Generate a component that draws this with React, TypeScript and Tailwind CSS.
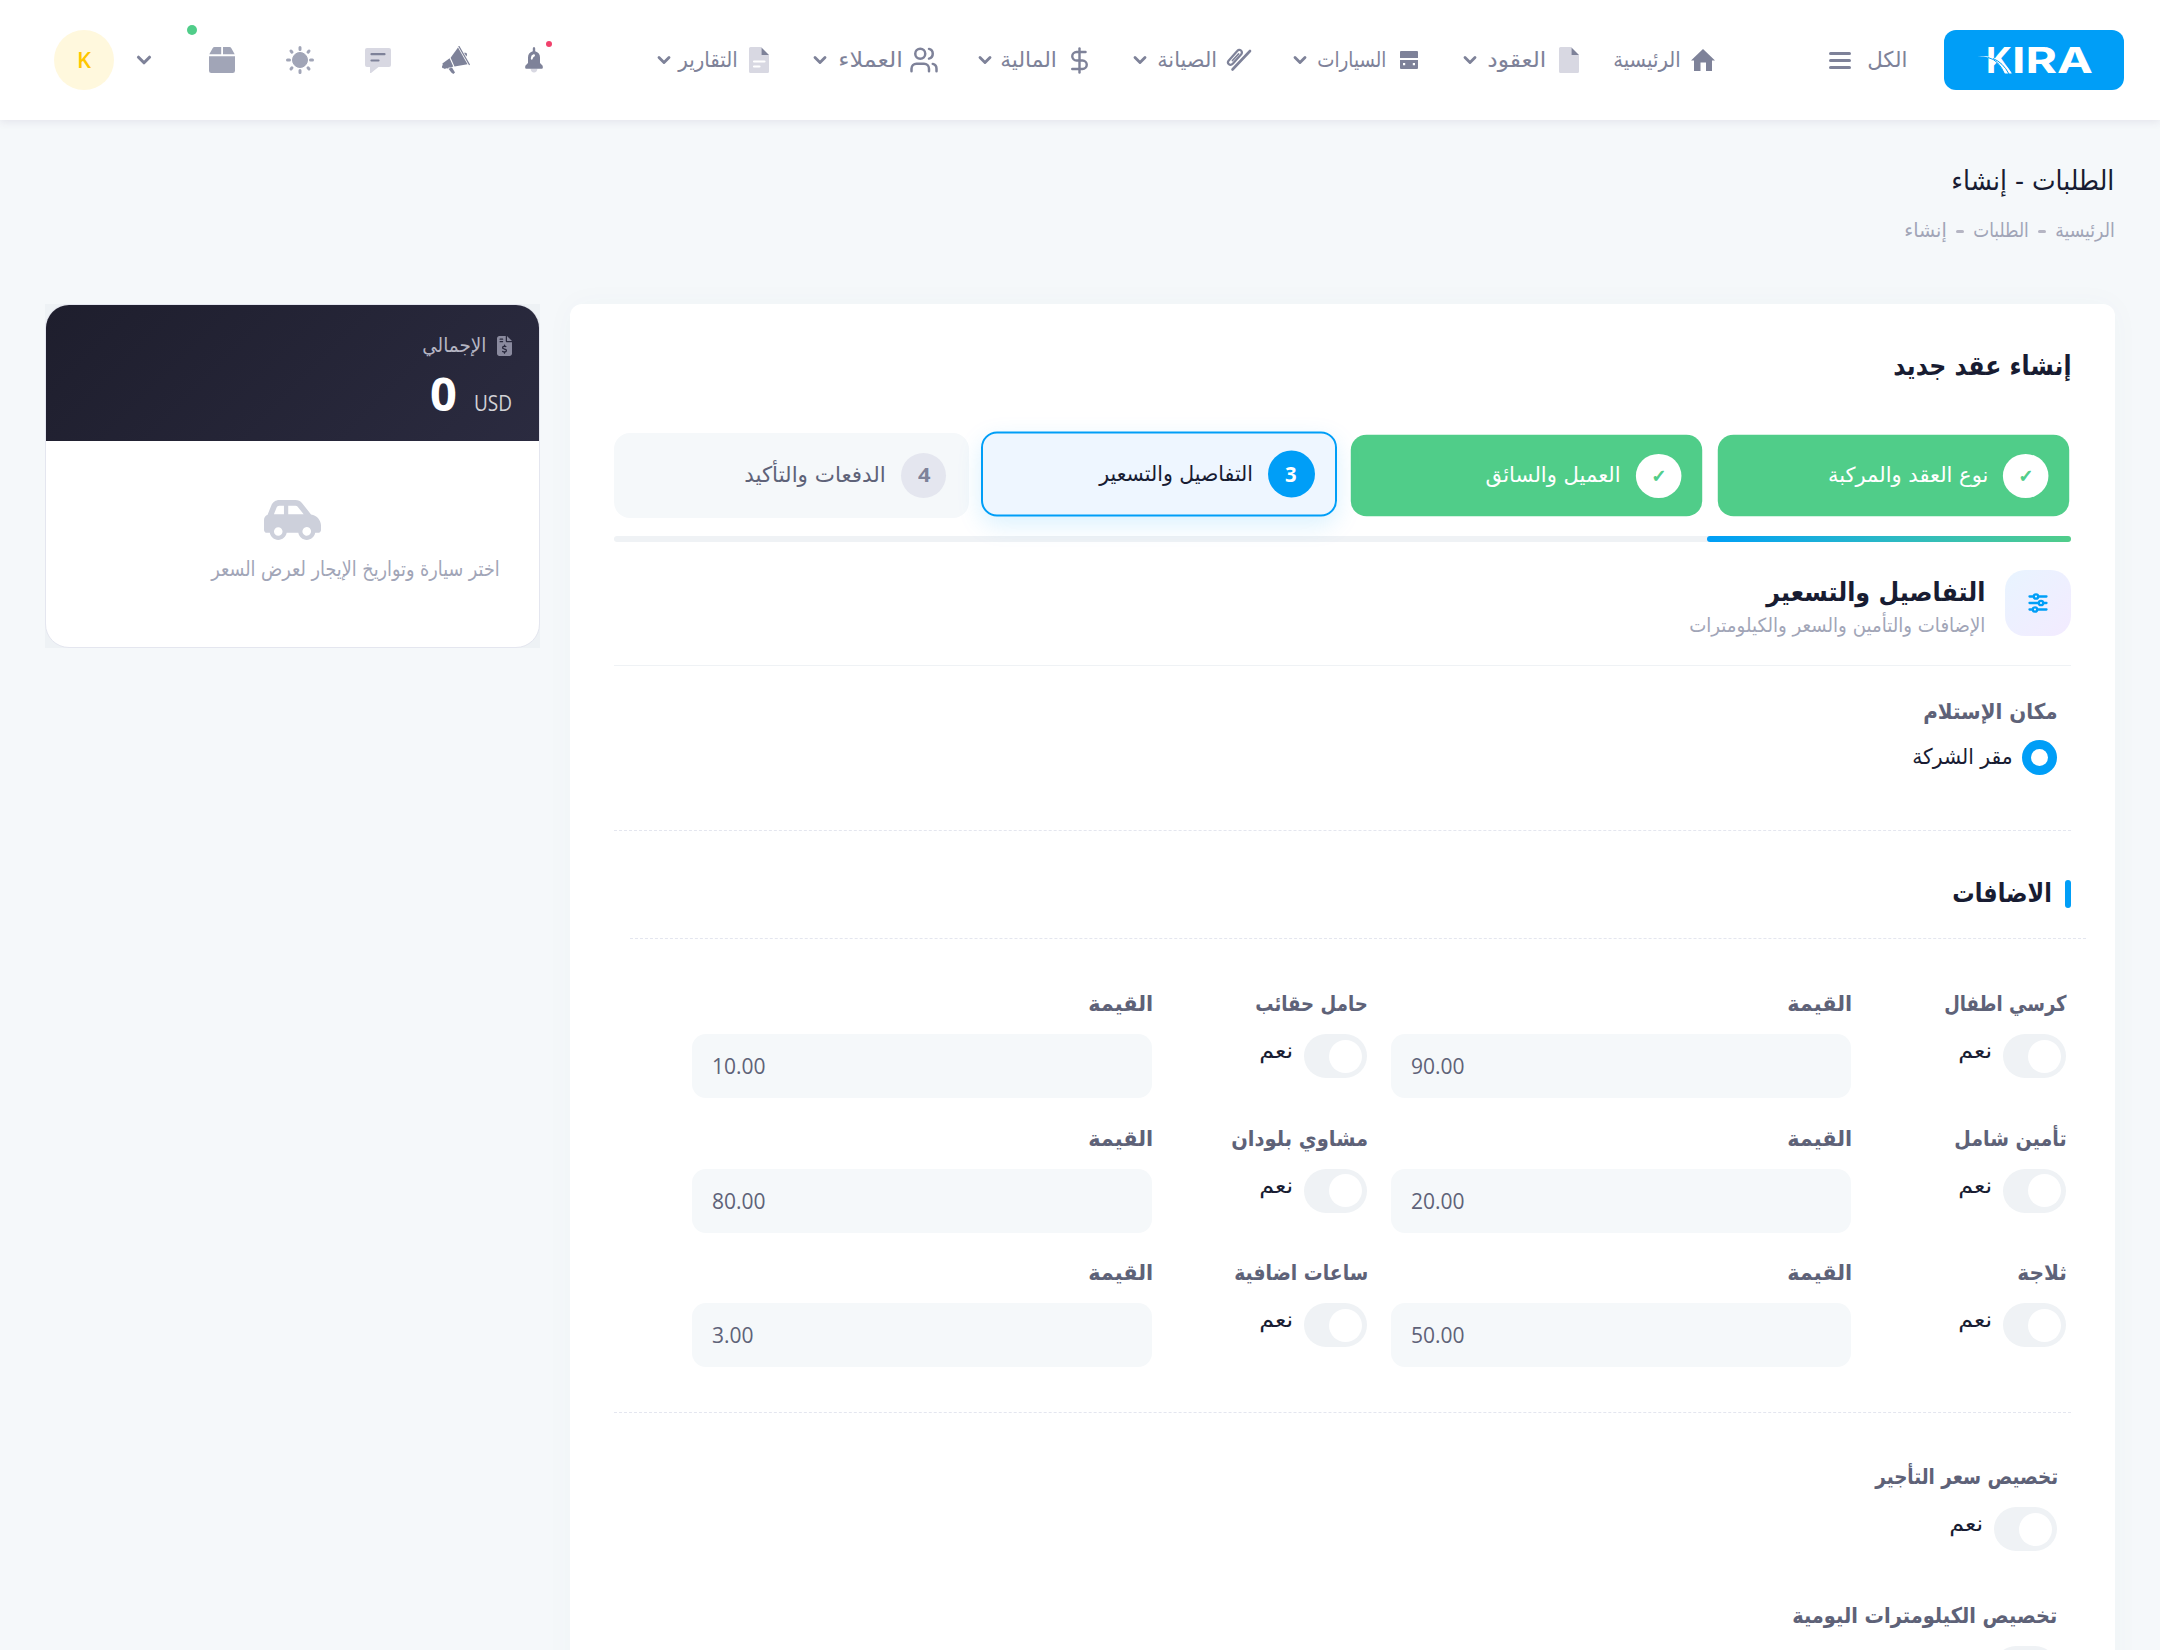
import clsx from "clsx";
import { ChevronDown, DollarSign, Users } from "lucide-react";
import { ReactNode, useLayoutEffect, useRef, useState } from "react";
import { FaCarSide, FaFileInvoiceDollar } from "react-icons/fa6";

type TextProps = {
	w: number;
	className?: string;
	ltr?: boolean;
	children: string;
};

// single line of text condensed to a fixed width
function Text({ w, className, ltr, children }: TextProps) {
	const ref = useRef<HTMLSpanElement>(null);
	const [scale, setScale] = useState(1);
	useLayoutEffect(() => {
		if (ref.current) setScale((ltr ? w : w + 1.5) / ref.current.offsetWidth);
	}, [w, ltr, children]);
	return (
		<span
			dir={ltr ? "ltr" : "rtl"}
			className={clsx("inline-block shrink-0 whitespace-nowrap leading-none", className)}
			style={{ width: w }}
		>
			<span
				ref={ref}
				className={clsx("inline-block", ltr ? "origin-left" : "origin-[100%_85%]")}
				style={{
					transform: ltr ? `scaleX(${scale})` : `translateX(0.7px) scale(${scale}, 1.08)`,
				}}
			>
				{children}
			</span>
		</span>
	);
}

const HomeIcon = () => (
	<svg width="24" height="22" viewBox="0 0 24 22" fill="currentColor">
		<path d="M12 0 24 11.5h-3V22h-6v-8.500H9.500V22H3V11.500H0z" />
	</svg>
);

const FileIcon = ({ lines }: { lines?: boolean }) => (
	<svg width="20" height="26" viewBox="0 0 20 26">
		<path d="M1.500 0H12.500V8H20V24.500Q20 26 18.500 26H1.500Q0 26 0 24.500V1.500Q0 0 1.500 0z" fill="#d8d8e2" />
		<path d="M12.500 0.500 20 8H12.500z" fill="#7e8299" />
		{lines && (
			<path d="M5 14.500h10.500M5 19.500h5.500" stroke="#fff" strokeWidth="2.200" strokeLinecap="round" />
		)}
	</svg>
);

const CarsIcon = () => (
	<svg width="18" height="18" viewBox="0 0 18 18" fill="currentColor">
		<path d="M1 0h16q1 0 1 1v6H0V1q0-1 1-1z" />
		<path
			fillRule="evenodd"
			d="M0 9h18v8q0 1-1 1H1q-1 0-1-1zM3 12v2.200h2.200V12zM12.800 12v2.200H15V12z"
		/>
	</svg>
);

const ToolsIcon = () => (
	<svg width="26" height="24" viewBox="0 0 26 24" fill="none" stroke="currentColor" strokeLinecap="round">
		<path d="M2.800 12.500 11 3.300q2-2.500 4-.800 1.800 1.800 0 4L7 15.500q-2.200 2.300-4.200.700-1.800-1.700 0-3.700z" strokeWidth="2.200" />
		<path d="M6.500 12.500 12.500 6" strokeWidth="1.800" />
		<path d="M6.500 21.500 24 3" strokeWidth="2.600" />
	</svg>
);

const BellIcon = () => (
	<svg width="18" height="26" viewBox="0 0 18 26">
		<path d="M5.500 21.500h7q-.5 4-3.500 4t-3.500-4z" fill="#d8d8e2" />
		<path
			d="M9 0q1.200 0 1.200 1.500v2.700Q15 5.500 15 10.500V16l2.500 2.500q1 3.300-.800 3.300H1.300Q-.5 21.800.5 18.500L3 16v-5.500Q3 5.500 7.800 4.200V1.500Q7.800 0 9 0z"
			fill="#7e8299"
		/>
		<path d="M5.800 11.200Q6 8 8.500 7.300q1.600-.200 1.500 1.200 0 .800-1 1.200-1 .5-1.300 2-.3 1-1 1-.900-.200-.900-1.500z" fill="#fff" />
	</svg>
);

const MegaphoneIcon = () => (
	<svg width="28" height="28" viewBox="0 0 28 28" fill="#7e8299">
		<path d="M17 .5 27.300 18.500" stroke="#7e8299" strokeWidth="1.300" strokeLinecap="round" />
		<path d="M16 1.500 25.500 18.200 12.500 20.500 8.600 11.700z" />
		<path d="M22 6.800q2.600-.6 3 1.200.2 1.300-.6 2.500z" />
		<path d="M7.600 12.300 11.300 20.500 8 21.700l-1-.5-1 1.300-2-.3-1 .8-1.500-.8-1.300-.2-.2-2 .8-1-.4-1.500z" />
		<path d="M6.500 22.700 10 21.500l3 5-1.700 1.500-2-1.500z" />
	</svg>
);

const MessageIcon = () => (
	<svg width="26" height="25" viewBox="0 0 26 25">
		<path d="M2 0h22q2 0 2 2v15q0 2-2 2H13.500L6 25h-1v-6H2q-2 0-2-2V2Q0 0 2 0z" fill="#d8d8e2" />
		<path d="M6.500 6.200h13M6.500 12.500h7" stroke="#7e8299" strokeWidth="2.200" strokeLinecap="round" />
	</svg>
);

const SunIcon = () => (
	<svg width="28" height="28" viewBox="0 0 28 28" fill="#a1a5b7" stroke="#a1a5b7">
		<circle cx="14" cy="14" r="7.500" />
		<path
			d="M14 1.500v2M14 24.500v2M1.500 14h2M24.500 14h2M5 5l1 1.200M22 21.800l1 1.200M5 23l1-1.200M22 6.200 23 5"
			strokeWidth="3"
			strokeLinecap="round"
		/>
	</svg>
);

const BoxIcon = () => (
	<svg width="26" height="26" viewBox="0 0 26 26" fill="#a1a5b7">
		<path d="M5.500 0h6.700v7.300H.3L3.800 1Q4.300 0 5.500 0zM14 0h6.500q1.200 0 1.700 1l3.500 6.300H14z" />
		<path d="M0 9.200h26v14.500Q26 26 23.700 26H2.300Q0 26 0 23.700z" />
	</svg>
);

const SlidersIcon = () => (
	<svg width="20" height="20" viewBox="0 0 20 20" fill="none" stroke="#009ef7" strokeWidth="2.300" strokeLinecap="round">
		<path d="M1.500 3.500h4M10.500 3.500h8M1.500 10h9M15.500 10h3M1.500 16.500h3M9.500 16.500h9" />
		<circle cx="8" cy="3.500" r="2.200" />
		<circle cx="13" cy="10" r="2.200" />
		<circle cx="7" cy="16.500" r="2.200" />
	</svg>
);

const Logo = () => (
	<svg width="120" height="50" viewBox="0 -9 120 50" fill="#fff" direction="ltr">
		<g fontFamily="Inter, Open Sans, sans-serif" fontWeight="700" fontSize="35.500">
			<text x="12" y="29" textLength="26" lengthAdjust="spacingAndGlyphs">K</text>
			<text x="38" y="29" textLength="81" lengthAdjust="spacingAndGlyphs">IRA</text>
		</g>
		<path d="M3 12.200Q22 11 30.500 29.500h7.300Q27 10 3 12.200z" />
		<path d="M14 13.500Q25 16 30.500 30M19 14.500Q29 18.500 35 30" fill="none" stroke="#009ef7" strokeWidth="1" />
	</svg>
);

type NavItem = {
	label: string;
	w: number;
	icon: ReactNode;
	iconGap?: string;
	menuGap?: string;
};

const navItems: NavItem[] = [
	{ label: "الرئيسية", w: 66, icon: <HomeIcon /> },
	{ label: "العقود", w: 58, icon: <FileIcon />, menuGap: "mr-2" },
	{ label: "السيارات", w: 68, icon: <CarsIcon />, menuGap: "mr-2" },
	{ label: "الصيانة", w: 58, icon: <ToolsIcon />, menuGap: "mr-2" },
	{ label: "المالية", w: 55, icon: <DollarSign size={29} strokeWidth={2} />, menuGap: "mr-1.5" },
	{ label: "العملاء", w: 63, icon: <Users size={32} strokeWidth={2} />, iconGap: "ml-[7px]", menuGap: "mr-[9px]" },
	{ label: "التقارير", w: 58, icon: <FileIcon lines />, iconGap: "ml-[7px]", menuGap: "mr-[5px]" },
];

const toolIcons = [
	<BellIcon />,
	<MegaphoneIcon />,
	<MessageIcon />,
	<SunIcon />,
	<BoxIcon />,
];

const extras = [
	[
		{ label: "كرسي اطفال", w: 121, value: "90.00", vw: 52 },
		{ label: "حامل حقائب", w: 111, value: "10.00", vw: 52 },
	],
	[
		{ label: "تأمين شامل", w: 111, value: "20.00", vw: 52 },
		{ label: "مشاوي بلودان", w: 135, value: "80.00", vw: 52 },
	],
	[
		{ label: "ثلاجة", w: 48, value: "50.00", vw: 52 },
		{ label: "ساعات اضافية", w: 133, value: "3.00", vw: 40 },
	],
];

function Header() {
	return (
		<header className="relative flex h-[120px] items-center bg-white pr-9 text-xl text-[#7e8299] shadow-[0_2px_8px_rgba(82,63,105,0.1)]">
			<div className="flex h-[60px] w-[180px] items-center justify-center rounded-xl bg-[#009ef7]">
				<Logo />
			</div>
			<Text w={39} className="mr-[37px]">الكل</Text>
			<div className="mr-[17px] flex w-[22px] flex-col gap-1">
				<span className="h-[3px] rounded bg-[#7e8299]" />
				<span className="h-[3px] rounded bg-[#7e8299]" />
				<span className="h-[3px] rounded bg-[#7e8299]" />
			</div>
			<nav className="mr-[111px] flex items-center gap-[30px]">
				{navItems.map((item) => (
					<a key={item.label} className="flex items-center">
						<span className={clsx("flex w-[30px] justify-center", item.iconGap ?? "ml-2")}>
							{item.icon}
						</span>
						<Text w={item.w}>{item.label}</Text>
						{item.menuGap && (
							<span className={clsx("flex w-[26px] pl-2", item.menuGap)}>
								<ChevronDown size={20} strokeWidth={3.4} className="shrink-0" />
							</span>
						)}
					</a>
				))}
			</nav>
			<div className="mr-auto flex items-center pl-[54px]">
				{toolIcons.map((icon, idx) => (
					<button key={idx} className="relative flex w-[78px] justify-center">
						{icon}
						{idx === 0 && (
							<span className="absolute -top-[6px] right-[21px] size-[6px] rounded-full bg-[#f1416c]" />
						)}
						{idx === 4 && (
							<span className="absolute -top-[22px] left-[4px] size-[10px] rounded-full bg-[#50cd89]" />
						)}
					</button>
				))}
				<span className="flex w-[69px] pr-7">
					<ChevronDown size={22} strokeWidth={3.4} />
				</span>
				<span className="flex size-[60px] items-center justify-center rounded-full bg-[#fff8dd] pb-[2px] font-['Open_Sans'] text-[22px] font-semibold text-[#ffc700]">
					<Text w={14} ltr>K</Text>
				</span>
			</div>
		</header>
	);
}

function Toggle() {
	return (
		<div className="flex gap-[11px]">
			<span className="flex h-11 w-[63px] items-center rounded-full bg-[#eff2f5] pr-[5px]">
				<span className="size-[33px] rounded-full bg-white" />
			</span>
			<Text w={33} className="mt-[7px] text-xl text-[#181c32]">نعم</Text>
		</div>
	);
}

function Label({ w, children }: { w: number; children: string }) {
	return (
		<div className="flex h-5 text-xl font-bold text-[#5e6278]">
			<Text w={w}>{children}</Text>
		</div>
	);
}

function Steps() {
	return (
		<div className="relative z-10 mt-[54px] grid h-[85px] grid-cols-4 gap-3 text-xl">
			{[
				{ label: "نوع العقد والمركبة", w: 161 },
				{ label: "العميل والسائق", w: 135 },
			].map((step) => (
				<div
					key={step.label}
					className="flex scale-x-[.99] scale-y-[.96] items-center gap-4 rounded-2xl bg-[#50cd89] pr-[21px] text-white"
				>
					<span className="flex size-[46px] items-center justify-center rounded-full bg-white text-lg font-bold text-[#50cd89] [-webkit-text-stroke:1px_#50cd89]">
						✓
					</span>
					<Text w={step.w} className="-mt-px">{step.label}</Text>
				</div>
			))}
			<div className="flex -translate-y-[1.500px] items-center gap-[15px] rounded-2xl border-2 border-[#009ef7] bg-[#eef6ff] pr-5 text-[#181c32] shadow-[0_8px_24px_rgba(0,158,247,0.15)]">
				<span className="flex size-[47px] items-center justify-center rounded-full bg-[#009ef7] pb-[3px] font-['Open_Sans'] text-[22px] font-bold text-white">
					<Text w={12} ltr>3</Text>
				</span>
				<Text w={152} className="-mt-px">التفاصيل والتسعير</Text>
			</div>
			<div className="flex items-center gap-4 rounded-2xl bg-[#f5f8fa] pr-[23px] text-[#5e6278]">
				<span className="flex size-[45px] items-center justify-center rounded-full bg-[#e4e6ef] pb-px font-['Open_Sans'] text-xl font-bold text-[#7e8299]">
					<Text w={12} ltr>4</Text>
				</span>
				<Text w={140} className="-mt-px">الدفعات والتأكيد</Text>
			</div>
		</div>
	);
}

function Summary() {
	return (
		<aside className="h-[344px] w-[495px] bg-[#eef2f5]">
			<div className="h-full overflow-hidden rounded-3xl border border-[#e4e6ef] bg-white">
				<div className="h-[136px] bg-linear-135 from-[#1e1e2d] to-[#2b2b40] pr-[27px] pt-[31px]">
					<div className="flex h-5 items-center gap-[11px]">
						<FaFileInvoiceDollar className="h-5 w-[15px] text-[#8a8a9e]" />
						<Text w={63} className="text-lg text-[#b5b5c3]">الإجمالي</Text>
					</div>
					<div className="mt-[14px] flex items-baseline gap-[17px] font-['Open_Sans']">
						<Text w={38} ltr className="text-[21px] text-[#d2d2d6]">USD</Text>
						<Text w={27} ltr className="text-[47px] font-bold text-white">0</Text>
					</div>
				</div>
				<div className="flex flex-col pr-[40px] pt-[59px]">
					<FaCarSide className="mr-[178px] h-[40px] w-[57px] text-[#cdd0db]" preserveAspectRatio="none" viewBox="0 32 640 448" />
					<Text w={287} className="mt-5 text-[19px] text-[#a1a5b7]">
						اختر سيارة وتواريخ الإيجار لعرض السعر
					</Text>
				</div>
			</div>
		</aside>
	);
}

export default function App() {
	return (
		<div
			dir="rtl"
			className="h-[1650px] w-[2160px] overflow-hidden bg-[#f5f8fa] font-['DejaVu_Sans',sans-serif]"
		>
			<Header />
			<div className="flex h-[184px] flex-col items-start pr-[46px] pt-[49px]">
				<Text w={162} className="text-[25px] text-[#181c32]">الطلبات - إنشاء</Text>
				<div className="mt-7 flex items-center text-lg text-[#a1a5b7]">
					<Text w={58}>الرئيسية</Text>
					<span className="mx-[10px] h-[3px] w-2 rounded-sm bg-[#b5b5c3]" />
					<Text w={54}>الطلبات</Text>
					<span className="mx-[10px] h-[3px] w-2 rounded-sm bg-[#b5b5c3]" />
					<Text w={41}>إنشاء</Text>
				</div>
			</div>

			<div className="flex items-start gap-[30px] px-[45px]">
				<main className="h-[1500px] w-[1545px] rounded-xl bg-white px-11 pt-[50px] shadow-[0_0_30px_rgba(76,87,125,0.03)]">
					<div className="flex h-[25px]">
						<Text w={177} className="text-[25px] font-bold text-[#181c32]">إنشاء عقد جديد</Text>
					</div>
					<Steps />
					<div className="mt-[18px] h-[6px] rounded bg-[#eff2f5]">
						<div className="h-full w-1/4 rounded bg-linear-to-l from-[#50cd89] to-[#009ef7]" />
					</div>

					<div className="mt-7 flex gap-[20px] border-b border-[#eff2f5] pb-[29px]">
						<span className="flex size-[66px] items-center justify-center rounded-[20px] bg-linear-135 from-[#e8f4ff] to-[#f3ebff]">
							<SlidersIcon />
						</span>
						<div className="flex flex-col pt-[11px]">
							<Text w={218} className="text-2xl font-bold text-[#181c32]">التفاصيل والتسعير</Text>
							<Text w={295} className="mt-3 text-lg text-[#a1a5b7]">
								الإضافات والتأمين والسعر والكيلومترات
							</Text>
						</div>
					</div>

					<div className="pr-[14px] pt-9">
						<Label w={133}>مكان الإستلام</Label>
						<div className="mt-[18px] flex h-[34px] items-center gap-[10px]">
							<span className="flex size-[35px] items-center justify-center rounded-full bg-[#009ef7]">
								<span className="size-[17px] rounded-full bg-white" />
							</span>
							<Text w={99} className="text-xl text-[#181c32]">مقر الشركة</Text>
						</div>
					</div>

					<div className="mt-[56px] border-t border-dashed border-[#e4e6ef]" />
					<div className="mt-[49px] flex h-7 items-center gap-[14px]">
						<span className="h-7 w-[6px] rounded-sm bg-[#009ef7]" />
						<Text w={98} className="text-2xl font-bold text-[#181c32]">الاضافات</Text>
					</div>
					<div className="-mr-[15px] ml-4 mt-[30px] border-t border-dashed border-[#e4e6ef]" />

					<div className="mt-[55px] flex flex-col gap-[30.600px] pr-[5px]">
						{extras.map((row, idx) => (
							<div key={idx} className="flex h-[104px] gap-6">
								{row.map((extra) => (
									<div key={extra.label} className="flex">
										<div className="flex w-[215px] flex-col gap-5">
											<Label w={extra.w}>{extra.label}</Label>
											<Toggle />
										</div>
										<div className="flex w-[460px] flex-col gap-5">
											<Label w={63}>القيمة</Label>
											<div
												dir="ltr"
												className="flex h-16 items-center rounded-[14px] bg-[#f5f8fa] pl-5 pt-px font-['Open_Sans'] text-[21px] text-[#5e6278]"
											>
												<Text w={extra.vw + 2} ltr>{extra.value}</Text>
											</div>
										</div>
									</div>
								))}
							</div>
						))}
					</div>

					<div className="mt-[45px] border-t border-dashed border-[#e4e6ef]" />
					<div className="flex flex-col gap-5 pr-[14px] pt-[54px]">
						<Label w={181}>تخصيص سعر التأجير</Label>
						<Toggle />
					</div>
					<div className="flex flex-col gap-5 pr-[14px] pt-[55px]">
						<Label w={264}>تخصيص الكيلومترات اليومية</Label>
						<Toggle />
					</div>
				</main>
				<Summary />
			</div>
		</div>
	);
}
